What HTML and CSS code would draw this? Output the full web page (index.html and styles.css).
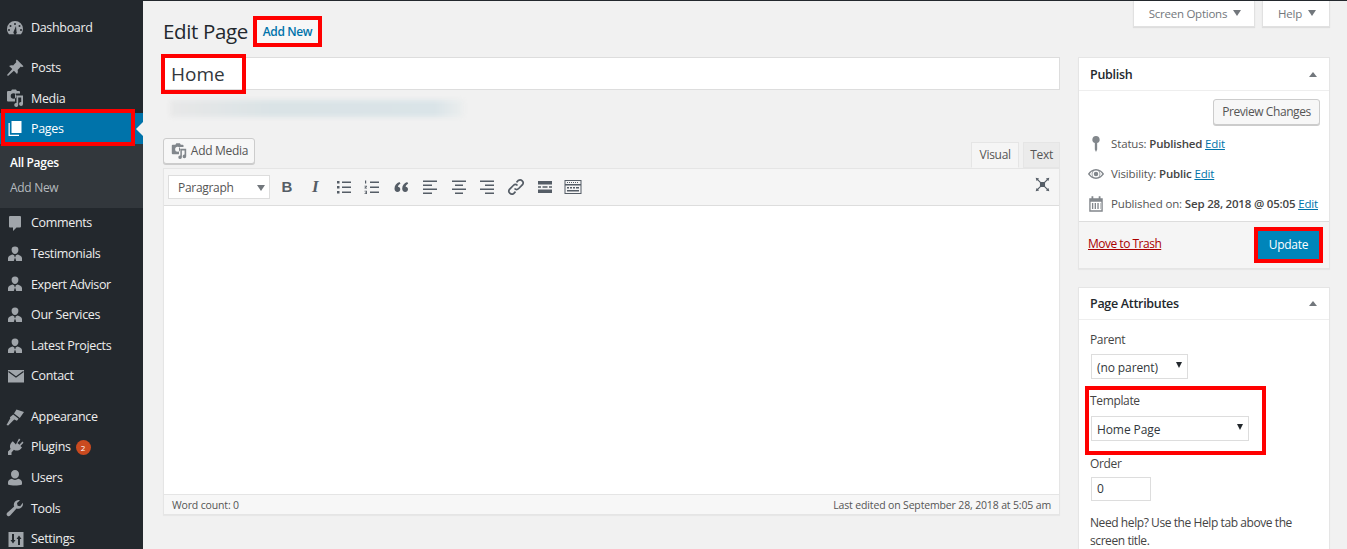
FILE: index.html
```html
<!DOCTYPE html>
<html lang="en">
<head>
<meta charset="utf-8">
<title>Edit Page</title>
<link rel="stylesheet" href="styles.css">
</head>
<body>
<svg class="defs" width="0" height="0">
  <symbol id="i-media" viewBox="0 0 20 20"><path d="M3 3h3l1-1.500h4l1 1.500h2a1 1 0 0 1 1 1v1.500h-3.500A1.500 1.500 0 0 0 10 7v6.500H3a1 1 0 0 1-1-1V4a1 1 0 0 1 1-1zm5.500 2.200a2.800 2.800 0 1 0 0 5.600 2.800 2.800 0 0 0 0-5.600zM11.500 7.500H18V16a2 2 0 1 1-1.800-2V9.500h-3V17a2 2 0 1 1-1.700-2z"/></symbol>
  <symbol id="i-person" viewBox="0 0 20 20"><path d="M10 2.500a3.400 3.400 0 0 1 3.400 3.600c0 2.200-1.500 4-3.400 4S6.600 8.300 6.600 6.100A3.400 3.400 0 0 1 10 2.500zM7.500 10.500l1.900 1-.5 5.500H3v-3c0-1.900 2.700-3 4.500-3.500zm5 0c1.800.5 4.500 1.600 4.500 3.500v3h-5.900l-.5-5.500zM10 12.300l.8.9-.8 3.300-.8-3.300z"/></symbol>
  <symbol id="i-user" viewBox="0 0 20 20"><path d="M10 2a4 4 0 0 1 4 4.200c0 2.300-1.700 4.300-4 4.300S6 8.500 6 6.200A4 4 0 0 1 10 2zm-3.200 8.800c1.900 1.500 4.500 1.500 6.400 0 2.100.5 3.800 1.700 3.800 3.400v2.300c-3.500 1.400-10.500 1.400-14 0v-2.300c0-1.700 1.700-2.900 3.800-3.400z"/></symbol>
  <symbol id="i-list" viewBox="0 0 20 20"><path d="M3 4h2.500v2.500H3zm5 .5h9V6H8zM3 9h2.500v2.500H3zm5 .5h9V11H8zM3 14h2.500v2.500H3zm5 .5h9V16H8z"/></symbol>
  <symbol id="i-olist" viewBox="0 0 20 20"><path d="M8 4.500h9V6H8zm0 5h9V11H8zm0 5h9V16H8zM3 3.500h1.200v3H3zm-.5 5.200h2.500v.8l-1.400 1.300h1.400v.8H2.500v-.8l1.400-1.300H2.500zm0 5h2.500V17H2.500v-.7h1.700v-.5H3v-.6h1.200v-.8H2.500z"/></symbol>
  <symbol id="i-left" viewBox="0 0 20 20"><path d="M3 3.500h14V5H3zm0 4h9V9H3zm0 4h14V13H3zm0 4h9V17H3z"/></symbol>
  <symbol id="i-center" viewBox="0 0 20 20"><path d="M3 3.500h14V5H3zm3 4h8V9H6zm-3 4h14V13H3zm3 4h8V17H6z"/></symbol>
  <symbol id="i-right" viewBox="0 0 20 20"><path d="M3 3.500h14V5H3zm5 4h9V9H8zm-5 4h14V13H3zm5 4h9V17H8z"/></symbol>
</svg>

<div class="admin">
  <nav class="sidebar">
    <ul class="menu">
      <li class="item"><svg class="ico" viewBox="0 0 20 20"><path fill-rule="evenodd" d="M10 3a8 8 0 0 0-8 8c0 2 .7 3.800 2 5.200h12a8 8 0 0 0 2-5.200 8 8 0 0 0-8-8zM10 5a1 1 0 1 1 0 2 1 1 0 0 1 0-2zM5.500 7a1 1 0 1 1 0 2 1 1 0 0 1 0-2zm9 0a1 1 0 1 1 0 2 1 1 0 0 1 0-2zM4 11a1 1 0 1 1 0 2 1 1 0 0 1 0-2zm12 0a1 1 0 1 1 0 2 1 1 0 0 1 0-2zM11 8l.5 5.500a1.700 1.700 0 1 1-2.800 0z"/></svg><span>Dashboard</span></li>
      <li class="item sep sep-first"><svg class="ico" viewBox="0 0 20 20"><path d="M11.800 1.500l6.700 6.700-1.600 1-1-.6-3.300 3.300c.5 1.500.2 3-.6 4l-3.100-3.200L3 18l-1-1 5.300-5.900-3.200-3.100c1-.8 2.500-1.100 4-.6l3.300-3.300-.6-1z"/></svg><span>Posts</span></li>
      <li class="item"><svg class="ico"><use href="#i-media"/></svg><span>Media</span></li>
      <li class="item current">
        <svg class="ico" viewBox="0 0 20 20"><path d="M6.500 2H16.500v12H6.500z"/><path d="M4.800 4v11.700H14v1.300H3.500V4z"/></svg><span>Pages</span>
      </li>
      <li class="submenu">
        <a class="sub on">All Pages</a>
        <a class="sub">Add New</a>
      </li>
      <li class="item"><svg class="ico" viewBox="0 0 20 20"><path d="M5 3h10a1 1 0 0 1 1 1v9.500a1 1 0 0 1-1 1h-3.500L8 18v-3.500H5a1 1 0 0 1-1-1V4a1 1 0 0 1 1-1z"/></svg><span>Comments</span></li>
      <li class="item"><svg class="ico"><use href="#i-person"/></svg><span>Testimonials</span></li>
      <li class="item"><svg class="ico"><use href="#i-person"/></svg><span>Expert Advisor</span></li>
      <li class="item"><svg class="ico"><use href="#i-person"/></svg><span>Our Services</span></li>
      <li class="item"><svg class="ico"><use href="#i-person"/></svg><span>Latest Projects</span></li>
      <li class="item"><svg class="ico" viewBox="0 0 20 20"><path d="M3 4h16v12.500H3z"/><path class="mail-fold" d="M3.500 5.500l7.500 5.500 7.500-5.500"/></svg><span>Contact</span></li>
      <li class="item sep"><svg class="ico" viewBox="0 0 20 20"><path d="M11.500 2.500l7.500 2.400-4.200 6.200-5.800-4.500zM8.200 7.600l5.400 4.200-1.700 1.900-2.700-1.300-6 6L1.500 18l3.800-6.700-.4-1.100z"/></svg><span>Appearance</span></li>
      <li class="item"><svg class="ico" viewBox="0 0 20 20"><path d="M14 1.500l1.400 1.200-3 3.300 2 1.700 3-3.300 1.100 1.300-3.100 3.400 1.600 1.500-1.300 1.300c-1.900 1.900-4.700 2.200-6.800.8L6.500 15.500V18H3v-3.500l2.600-2.500C4.500 10 4.800 7.200 6.500 5.500l1.300-1.200 3.100 3.100z"/></svg><span>Plugins</span><b class="badge">2</b></li>
      <li class="item"><svg class="ico"><use href="#i-user"/></svg><span>Users</span></li>
      <li class="item"><svg class="ico" viewBox="0 0 20 20"><path d="M17.800 4.800a4.800 4.800 0 0 1-6.300 5.700l-6.300 7a2 2 0 0 1-3-2.700l7-6.200A4.800 4.800 0 0 1 15 2.200l-3 2.800.6 2.700 2.600.6z"/></svg><span>Tools</span></li>
      <li class="item"><svg class="ico" viewBox="0 0 20 20"><path fill-rule="evenodd" d="M3.500 3h15v15h-15zM7 5v6H5.500L8 14.500 10.500 11H9V5zm6 11v-6h-1.500L14 6.500l2.500 3.500H15v6z"/></svg><span>Settings</span></li>
    </ul>
  </nav>

  <main class="wrap">
    <section class="col-main">
      <div class="head">
        <h1>Edit Page</h1>
        <a class="add-new">Add New</a>
      </div>
      <div class="title-field">
        <span class="title-text">Home</span>
      </div>
      <div class="permalink"></div>

      <div class="media-row">
        <button class="btn add-media"><svg class="ico-s"><use href="#i-media"/></svg>Add Media</button>
        <div class="tabs">
          <span class="tab active">Visual</span>
          <span class="tab">Text</span>
        </div>
      </div>

      <div class="editor">
        <div class="toolbar">
          <div class="format">Paragraph<i class="caret"></i></div>
          <span class="tb tb-b">B</span>
          <span class="tb tb-i">I</span>
          <svg class="tb-ic"><use href="#i-list"/></svg>
          <svg class="tb-ic"><use href="#i-olist"/></svg>
          <svg class="tb-ic" viewBox="0 0 20 20"><path d="M8.500 5C5.500 6 3.500 8.200 3.500 11.500c0 2 1.200 3.500 3 3.500 1.600 0 2.800-1.100 2.800-2.700 0-1.500-1-2.500-2.400-2.600.3-1.200 1.200-2.300 2.600-3zm7.700 0c-3 1-5 3.200-5 6.500 0 2 1.200 3.500 3 3.500 1.600 0 2.800-1.100 2.800-2.700 0-1.500-1-2.500-2.400-2.600.3-1.200 1.200-2.300 2.600-3z"/></svg>
          <svg class="tb-ic"><use href="#i-left"/></svg>
          <svg class="tb-ic"><use href="#i-center"/></svg>
          <svg class="tb-ic"><use href="#i-right"/></svg>
          <svg class="tb-ic" viewBox="0 0 20 20"><path fill="none" stroke="currentColor" stroke-width="1.700" d="M8.500 11.500a3 3 0 0 0 4.200 0l3.800-3.800a3 3 0 0 0-4.200-4.200l-1.800 1.800M11.500 8.500a3 3 0 0 0-4.200 0l-3.800 3.800a3 3 0 0 0 4.200 4.200l1.800-1.800"/></svg>
          <svg class="tb-ic" viewBox="0 0 20 20"><path d="M3 4h14v3.500H3zm0 8.500h14V16H3zM3 9.300h3v1.400H3zm4.500 0h5v1.400h-5zm6.500 0h3v1.400h-3z"/></svg>
          <svg class="tb-ic" viewBox="0 0 20 20"><path fill-rule="evenodd" d="M1.500 3h17v14h-17zM2.500 4v3h15V4zm0 4.500v7.500h15V8.500zM4 5h1v1H4zm2 0h1v1H6zm2 0h1v1H8zm2 0h1v1h-1zm2 0h1v1h-1zm2 0h1v1h-1zM4 10h2v1.500H4zm3 0h2v1.500H7zm3 0h2v1.500h-2zm3 0h3v1.500h-3zM4 13h12v1.500H4z"/></svg>
          <svg class="tb-ic expand" viewBox="0 0 20 20"><path d="M7 7h6v6H7zM2 2l4 1-1 1 3 3-1 1-3-3-1 1zm16 0l-1 4-1-1-3 3-1-1 3-3-1-1zM2 18l1-4 1 1 3-3 1 1-3 3 1 1zm16 0l-4-1 1-1-3-3 1-1 3 3 1-1z"/></svg>
        </div>
        <div class="editor-body"></div>
        <div class="statusbar">
          <span>Word count: 0</span>
          <span>Last edited on September 28, 2018 at 5:05 am</span>
        </div>
      </div>
    </section>

    <aside class="col-side">
      <div class="meta-tabs">
        <span class="meta-tab">Screen Options<i class="caret"></i></span>
        <span class="meta-tab">Help<i class="caret"></i></span>
      </div>

      <section class="box publish">
        <header class="box-head"><h2>Publish</h2><i class="caret-up"></i></header>
        <div class="preview-row"><button class="btn preview">Preview Changes</button></div>
        <div class="pub-row">
          <svg class="ico-m" viewBox="0 0 20 20"><path d="M10 1a4 4 0 0 1 1.300 7.800V16L10 19l-1.300-3V8.800A4 4 0 0 1 10 1z"/></svg>
          <span>Status: <b>Published</b> <a>Edit</a></span>
        </div>
        <div class="pub-row">
          <svg class="ico-m" viewBox="0 0 20 20"><path fill-rule="evenodd" d="M10 4.500c4 0 7 2.600 9 5.500-2 2.900-5 5.500-9 5.500S3 12.900 1 10c2-2.900 5-5.500 9-5.500zM10 6a4 4 0 1 0 0 8 4 4 0 0 0 0-8zM3 10c1 1.300 2 2.400 3.300 3.200a5.500 5.500 0 0 1 0-6.400C5 7.600 4 8.700 3 10zm14 0c-1-1.300-2-2.400-3.300-3.200a5.500 5.500 0 0 1 0 6.400c1.300-.8 2.300-1.900 3.300-3.200zM10 7.500a2.500 2.500 0 1 1 0 5 2.500 2.500 0 0 1 0-5z"/></svg>
          <span>Visibility: <b>Public</b> <a>Edit</a></span>
        </div>
        <div class="pub-row">
          <svg class="ico-m" viewBox="0 0 20 20"><path fill-rule="evenodd" d="M2.500 3.500H5V1.500h2v2h6v-2h2v2h2.500V18.500h-15zM4 7.500V17h12V7.500zM5.500 9H7v6.500H5.500zm3 0H10v6.500H8.500zm3 0H13v6.500h-1.500zm3 0H15v6.500h-.5z"/></svg>
          <span>Published on: <b>Sep 28, 2018 @ 05:05</b> <a>Edit</a></span>
        </div>
        <footer class="pub-foot">
          <a class="trash">Move to Trash</a>
          <button class="update">Update</button>
        </footer>
      </section>

      <section class="box attrs">
        <header class="box-head"><h2>Page Attributes</h2><i class="caret-up"></i></header>
        <div class="attrs-body">
          <p class="lbl lbl-parent">Parent</p>
          <div class="sel sel-parent">(no parent)<i class="caret-dark"></i></div>
          <div class="tpl">
            <p class="lbl">Template</p>
            <div class="sel sel-tpl">Home Page<i class="caret-dark"></i></div>
          </div>
          <p class="lbl">Order</p>
          <div class="order">0</div>
          <p class="help">Need help? Use the Help tab above the screen title.</p>
        </div>
      </section>
    </aside>
  </main>
</div>
</body>
</html>
```
FILE: styles.css
```css
*, *::before, *::after { box-sizing: border-box; }
html, body { margin: 0; height: 100%; overflow: hidden; }
body {
  background: #f1f1f1;
  color: #444;
  font-family: "Open Sans", "Noto Sans", sans-serif;
  font-size: 12px;
  line-height: 1.4;
}
.defs { position: absolute; }
ul { list-style: none; margin: 0; padding: 0; }
p, h1, h2 { margin: 0; font-weight: 400; }
a { color: #0073aa; }
button { font: inherit; }

.admin { display: flex; height: 549px; border-top: 1px solid #23282d; }

/* sidebar */
.sidebar { flex: 0 0 143px; background: #23282d; padding-top: 11.700px; }
.item {
  position: relative;
  display: flex;
  align-items: center;
  height: 30.600px;
  padding-left: 5px;
  color: #eee;
  font-size: 12.500px;
  letter-spacing: -.33px;
}
.item span { margin-left: 6px; }
.sep { margin-top: 9.800px; }
.sep-first { margin-top: 9.300px; }
.ico { width: 20px; height: 20px; fill: #a0a5aa; flex: none; }
.mail-fold { fill: none; stroke: #23282d; stroke-width: 1.200; }
.current {
  margin-top: -1px;
  height: 31.600px;
  padding-top: 1px;
  background: #0073aa;
  color: #fff;
}
.current .ico { fill: #fff; }
.current::before {
  content: "";
  position: absolute;
  left: 1px;
  top: -4px;
  width: 134px;
  height: 37px;
  border: 4px solid #f00;
}
.current::after {
  content: "";
  position: absolute;
  right: 0;
  top: 9px;
  border: 7px solid transparent;
  border-right-color: #f1f1f1;
  border-left-width: 0;
}
.submenu { background: #32373c; padding: 5.500px 0 0 10px; height: 63.500px; display: flex; flex-direction: column; }
.sub { color: #b4b9be; font-size: 12px; line-height: 25px; letter-spacing: -.3px; }
.sub.on { color: #fff; font-weight: 600; }
.badge {
  margin-left: 5px;
  width: 15px;
  height: 15px;
  border-radius: 50%;
  background: #ca4a1f;
  color: #fff;
  font-size: 8px;
  font-weight: 400;
  line-height: 15px;
  text-align: center;
  letter-spacing: 0;
}

/* layout */
.wrap { flex: 1; display: grid; grid-template-columns: 897px 252px; column-gap: 18px; padding-left: 20px; align-items: start; }

/* head */
.head { display: flex; align-items: center; height: 56px; padding: 10px 0 6px; }
h1 { font-size: 20.500px; line-height: 30px; color: #23282d; letter-spacing: -.35px; }
.add-new {
  margin-left: 5px;
  width: 69px;
  height: 31px;
  line-height: 23px;
  text-align: center;
  border: 4px solid #f00;
  background: #f7f7f7;
  color: #0073aa;
  font-size: 12px;
  font-weight: 600;
  letter-spacing: -.4px;
  white-space: nowrap;
}
.title-field {
  position: relative;
  height: 33px;
  background: #fff;
  border: 1px solid #ddd;
  font-size: 19px;
  line-height: 33px;
  padding-left: 7px;
  color: #32373c;
}
.title-field::before {
  content: "";
  position: absolute;
  left: -3px;
  top: -4px;
  width: 85px;
  height: 40px;
  border: 4px solid #f00;
}
.permalink {
  height: 17px;
  width: 294px;
  margin: 10px 0 0 7px;
  border-radius: 3px;
  background: linear-gradient(90deg, #e8e8e8, #dae3e6 35%, #dae4e8 90%, #eceeee);
  filter: blur(2px);
}

.media-row { display: flex; justify-content: space-between; align-items: flex-end; height: 51px; }
.btn {
  display: inline-flex;
  align-items: center;
  justify-content: center;
  height: 26px;
  padding: 0 6px;
  border: 1px solid #ccc;
  border-radius: 3px;
  background: #f7f7f7;
  box-shadow: 0 1px 0 #ccc;
  color: #555;
  font-size: 12px;
  letter-spacing: -.3px;
  white-space: nowrap;
}
.add-media { margin-bottom: 4px; width: 92px; padding: 0; }
.ico-s { width: 18px; height: 18px; fill: #82878c; margin-right: 3px; flex: none; }
.tabs { display: flex; gap: 4px; }
.tab {
  height: 26px;
  padding: 0 6px;
  line-height: 24px;
  border: 1px solid #e5e5e5;
  background: #ebebeb;
  color: #555;
  font-size: 12px;
  letter-spacing: -.3px;
}
.tab.active { background: #f5f5f5; border-bottom-color: #f5f5f5; padding: 0 7.500px; }

.editor { border: 1px solid #e5e5e5; background: #fff; box-shadow: 0 1px 1px rgba(0,0,0,.04); }
.toolbar {
  display: flex;
  align-items: center;
  height: 37px;
  padding-left: 4px;
  background: #f5f5f5;
  border-bottom: 1px solid #ddd;
  color: #555d66;
  fill: #555d66;
}
.format {
  position: relative;
  width: 102px;
  height: 24px;
  margin-right: 7px;
  padding-left: 9px;
  line-height: 23px;
  border: 1px solid #ddd;
  background: #fff;
  font-size: 12px;
  letter-spacing: -.3px;
  color: #555;
}
.format .caret { position: absolute; right: 4px; top: 9px; margin: 0; }
.caret {
  display: inline-block;
  margin-left: 6px;
  border: 4px solid transparent;
  border-top: 6px solid #72777c;
  border-bottom-width: 0;
  vertical-align: 2px;
}
.tb { width: 20px; margin-right: 8.400px; text-align: center; font-size: 15px; line-height: 20px; }
.tb-b { font-family: "Liberation Sans", sans-serif; font-weight: 700; }
.tb-i { font-family: "Liberation Serif", serif; font-style: italic; font-weight: 700; font-size: 17px; }
.tb-ic { flex: none; width: 20px; height: 20px; margin-right: 8.700px; }
.expand { width: 17px; height: 17px; margin: 0 8px 5px auto; }
.editor-body { height: 288px; background: #fff; }
.statusbar {
  display: flex;
  justify-content: space-between;
  height: 20px;
  padding: 0 8px;
  line-height: 20px;
  font-size: 10.500px;
  letter-spacing: -.15px;
  color: #555;
  background: #f7f7f7;
  border-top: 1px solid #e5e5e5;
}

/* side */
.meta-tabs { display: flex; justify-content: flex-end; gap: 7px; height: 56px; }
.meta-tab {
  height: 26px;
  padding: 0 13px 0 15px;
  line-height: 26px;
  background: #fff;
  border: 1px solid #e1e1e1;
  border-top: 0;
  box-shadow: 0 1px 1px rgba(0,0,0,.08);
  color: #72777c;
  font-size: 11.500px;
  letter-spacing: -.25px;
  white-space: nowrap;
}
.box { background: #fff; border: 1px solid #e5e5e5; box-shadow: 0 1px 1px rgba(0,0,0,.04); }
.box-head {
  display: flex;
  justify-content: space-between;
  align-items: center;
  height: 33px;
  padding: 1px 11px 0;
  border-bottom: 1px solid #eee;
}
.attrs .box-head { height: 32px; padding-top: 0; }
.box-head h2 { font-size: 12.500px; font-weight: 600; color: #23282d; letter-spacing: -.3px; }
.caret-up { border: 4px solid transparent; border-bottom: 5px solid #72777c; border-top-width: 0; margin-right: 1px; }
.publish { height: 212px; display: flex; flex-direction: column; }
.preview-row { display: flex; justify-content: flex-end; padding: 8px 9px 0; height: 38px; }
.preview { width: 107px; padding: 0; letter-spacing: -.42px; }
.pub-row {
  display: flex;
  align-items: center;
  height: 30px;
  padding-left: 8px;
  font-size: 11.500px;
  letter-spacing: -.14px;
  color: #555;
  white-space: nowrap;
}
.pub-row b { color: #444; font-weight: 600; letter-spacing: -.2px; }
.pub-row a { text-decoration: underline; }
.ico-m { width: 18px; height: 18px; fill: #82878c; margin: 0 6px 0 0; flex: none; }
.pub-foot {
  margin-top: auto;
  height: 47px;
  display: flex;
  justify-content: space-between;
  align-items: center;
  padding: 0 6px 0 9px;
  background: #f5f5f5;
  border-top: 1px solid #ddd;
}
.trash { color: #a00; text-decoration: underline; font-size: 12px; letter-spacing: -.5px; margin-top: -2px; }
.update {
  width: 69px;
  height: 36px;
  border: 4px solid #f00;
  background: #0085ba;
  color: #fff;
  font-size: 12px;
  letter-spacing: -.25px;
}
.attrs { margin-top: 18px; }
.attrs-body { padding: 0 11px; font-size: 12px; letter-spacing: -.35px; color: #444; height: 232px; }
.lbl { line-height: 17px; }
.lbl-parent { padding-top: 11px; height: 28px; }
.sel {
  position: relative;
  height: 25px;
  padding-left: 5px;
  line-height: 25px;
  border: 1px solid #ddd;
  background: #fff;
  color: #32373c;
  margin-left: 1px;
  letter-spacing: -.1px;
}
.sel-parent { width: 97px; margin-top: 6px; }
.sel-tpl { width: 158px; margin-top: 7px; }
.caret-dark {
  position: absolute;
  right: 5px;
  top: 7px;
  border: 3.500px solid transparent;
  border-top: 6px solid #23282d;
  border-bottom-width: 0;
}
.tpl {
  margin: 7px 0 0 -5px;
  width: 181px;
  height: 69px;
  padding: 2px 0 0 1px;
  border: 4px solid #f00;
}
.order {
  width: 60px;
  height: 24px;
  margin: 5px 0 0 1px;
  padding-left: 5px;
  line-height: 22px;
  border: 1px solid #ddd;
  background: #fff;
  color: #32373c;
}
.help { margin-top: 13px; line-height: 18px; width: 222px; letter-spacing: -.42px; }
```
